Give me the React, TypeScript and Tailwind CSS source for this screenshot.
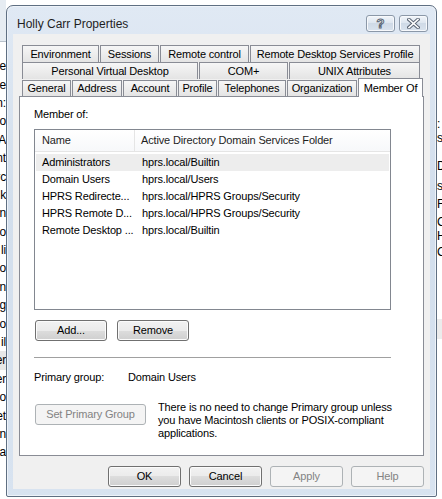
import React from 'react';

const TAB_ROW_1 = [
  { label: 'Environment', w: 'w-[77px]' },
  { label: 'Sessions', w: 'w-[59px]' },
  { label: 'Remote control', w: 'w-[89px]' },
  { label: 'Remote Desktop Services Profile', w: 'w-[170px]' },
];

const TAB_ROW_2 = [
  { label: 'Personal Virtual Desktop', w: 'w-[176px]' },
  { label: 'COM+', w: 'w-[89px]' },
  { label: 'UNIX Attributes', w: 'w-[131px]' },
];

const TAB_ROW_3 = [
  { label: 'General', w: 'w-[49px]' },
  { label: 'Address', w: 'w-[50px]' },
  { label: 'Account', w: 'w-[54px]' },
  { label: 'Profile', w: 'w-[39px]' },
  { label: 'Telephones', w: 'w-[68px]' },
  { label: 'Organization', w: 'w-[70px]' },
];

const GROUPS = [
  { name: 'Administrators', folder: 'hprs.local/Builtin' },
  { name: 'Domain Users', folder: 'hprs.local/Users' },
  { name: 'HPRS Redirecte...', folder: 'hprs.local/HPRS Groups/Security' },
  { name: 'HPRS Remote D...', folder: 'hprs.local/HPRS Groups/Security' },
  { name: 'Remote Desktop ...', folder: 'hprs.local/Builtin' },
];

// bits of the window behind, cut off at the edges
const LEFT_BITS = ['ne', 'e', 'n:', 'o', 'A', 'nt', 'rc', 'k', 'n', 'o', 'li', 'o', 'n', 'g', 'o', 'il', 'er', 'er', 'o', 'et', 'n', 'a'];

const btn =
  'h-[21px] flex items-center justify-center rounded-[3px] border border-[#707070] bg-[linear-gradient(#f2f2f2_0%,#ebebeb_50%,#dddddd_50%,#cfcfcf_100%)] shadow-[inset_0_0_0_1px_#fbfbfb] text-black';
const btnOff =
  'h-[21px] flex items-center justify-center rounded-[3px] border border-[#adb2b5] bg-[#f4f4f4] text-[#838383]';

const Tab = ({ label, w, h = 'h-[17px]' }: { label: string; w: string; h?: string }) => (
  <div
    className={`${w} ${h} shrink-0 flex items-center justify-center border-l border-t border-r border-[#898c95] bg-[linear-gradient(#f6f6f6,#e4e4e4)] whitespace-nowrap leading-none`}
  >
    {label}
  </div>
);

export default function App() {
  return (
    <div className="w-[442px] h-[499px] overflow-hidden flex bg-white text-[11px] tracking-[-0.15px] text-black font-['Liberation_Sans',Arial,sans-serif]">
      {/* left edge of background window */}
      <div className="w-[6px] shrink-0 flex flex-col overflow-hidden">
        <div className="h-[42px] shrink-0 bg-[#e6ecf2] border-b border-[#b9c2cc]" />
        <div className="flex flex-col pt-[15px] text-[12px]">
          {LEFT_BITS.map((t, i) => (
            <div key={i} className={`h-[18.4px] flex justify-end items-center whitespace-nowrap ${i === 16 ? 'bg-[#e8e8e8]' : ''}`}>
              {t}
            </div>
          ))}
        </div>
      </div>

      {/* dialog window */}
      <div className="w-[431px] h-[492px] mt-[5px] shrink-0 flex flex-col rounded-t-[7px] rounded-b-[2px] border border-[#5f6f82] bg-[linear-gradient(#e0e9f4,#d2deec_40%,#d8e3f0)] shadow-[inset_0_0_0_1px_#eef3f9]">
        {/* title bar */}
        <div className="h-[28px] shrink-0 flex items-start pt-[9px] pl-[10px] pr-[8px]">
          <span className="mt-[2px] text-[12px] leading-[14px] tracking-normal text-[#1e1e1e]">Holly Carr Properties</span>
          <div className="ml-auto flex gap-[4px]">
            <div className="w-[29px] h-[17px] flex items-center justify-center rounded-[3px] border border-[#8b98a8] bg-[linear-gradient(#f1f5fa,#dce5ef_50%,#cfdae7_50%,#d9e3ee)] shadow-[inset_0_0_0_1px_#f7f9fc]">
              <span className="text-[13px] font-bold leading-none text-white [-webkit-text-stroke:1px_#5b6675]">?</span>
            </div>
            <div className="w-[29px] h-[17px] flex items-center justify-center rounded-[3px] border border-[#8b98a8] bg-[linear-gradient(#f1f5fa,#dce5ef_50%,#cfdae7_50%,#d9e3ee)] shadow-[inset_0_0_0_1px_#f7f9fc]">
              <svg width="13" height="11" viewBox="0 0 13 11">
                <path d="M2 1.5 L11 9.5 M11 1.5 L2 9.5" stroke="#5b6675" strokeWidth="3.6" strokeLinecap="square" />
                <path d="M2 1.5 L11 9.5 M11 1.5 L2 9.5" stroke="#ffffff" strokeWidth="1.6" strokeLinecap="square" />
              </svg>
            </div>
          </div>
        </div>

        {/* client area */}
        <div className="mx-[6px] h-[455px] shrink-0 bg-[#f0f0f0] flex flex-col pt-[11px] pl-[6px]">
          {/* tabs */}
          <div className="flex flex-col pl-[3px]">
            <div className="flex gap-[1px]">
              {TAB_ROW_1.map((t) => (
                <Tab key={t.label} {...t} />
              ))}
            </div>
            <div className="flex gap-[1px]">
              {TAB_ROW_2.map((t) => (
                <Tab key={t.label} {...t} />
              ))}
            </div>
            <div className="h-[17px] flex items-end gap-[1px]">
              {TAB_ROW_3.map((t) => (
                <Tab key={t.label} {...t} h="h-[16px]" />
              ))}
              <div className="relative z-10 w-[65px] h-[19px] -mb-px shrink-0 flex items-start justify-center pt-[4px] border-l border-t border-r border-[#898c95] bg-white whitespace-nowrap leading-none">
                Member Of
              </div>
            </div>
          </div>

          {/* tab page */}
          <div className="w-[405px] h-[360px] border border-[#898c95] bg-white flex flex-col pl-[14px] pt-[11px]">
            <div className="leading-[13px]">Member of:</div>

            <div className="mt-[8px] w-[357px] h-[181px] border border-[#828790] bg-white flex flex-col">
              <div className="h-[22px] shrink-0 flex items-stretch border-b border-[#e5e5e5] bg-[linear-gradient(#ffffff,#f7f8fa)] text-[#1e1e1e]">
                <div className="w-[100px] flex items-center pl-[7px] border-r border-[#e5e5e5]">Name</div>
                <div className="flex items-center pl-[6px]">Active Directory Domain Services Folder</div>
              </div>
              <div className="flex flex-col pt-[2px]">
                {GROUPS.map((g, i) => (
                  <div
                    key={g.name}
                    className={`h-[17px] mx-[1px] flex items-center whitespace-nowrap ${i === 0 ? 'bg-[#ededed]' : ''}`}
                  >
                    <span className="w-[99px] pl-[6px]">{g.name}</span>
                    <span className="pl-[7px]">{g.folder}</span>
                  </div>
                ))}
              </div>
            </div>

            <div className="mt-[10px] ml-[1px] flex gap-[10px]">
              <div className={`${btn} w-[72px]`}>Add...</div>
              <div className={`${btn} w-[72px]`}>Remove</div>
            </div>

            <div className="mt-[16px] w-[357px] h-[2px] border-t border-[#a0a0a0] border-b border-b-white" />

            <div className="mt-[12px] flex leading-[13px]">
              <span className="w-[94px]">Primary group:</span>
              <span>Domain Users</span>
            </div>

            <div className="mt-[20px] ml-[1px] flex items-start gap-[12px]">
              <div className={`${btnOff} w-[111px]`}>Set Primary Group</div>
              <p className="-mt-[3px] leading-[13px] whitespace-nowrap">
                There is no need to change Primary group unless
                <br />
                you have Macintosh clients or POSIX-compliant
                <br />
                applications.
              </p>
            </div>
          </div>

          {/* dialog buttons */}
          <div className="mt-[10px] pr-[6px] flex justify-end gap-[8px]">
            <div className={`${btn} w-[73px]`}>OK</div>
            <div className={`${btn} w-[73px]`}>Cancel</div>
            <div className={`${btnOff} w-[73px]`}>Apply</div>
            <div className={`${btnOff} w-[73px]`}>Help</div>
          </div>
        </div>
      </div>

      {/* right edge of background window */}
      <div className="w-[5px] shrink-0 flex flex-col overflow-hidden text-[12px]">
        <div className="h-[115px] shrink-0" />
        <div className="h-[14px] whitespace-nowrap">:</div>
        <div className="h-[28px] whitespace-nowrap">s</div>
        <div className="h-[20px] whitespace-nowrap">D</div>
        <div className="h-[18px] whitespace-nowrap">s</div>
        <div className="h-[18px] whitespace-nowrap">F</div>
        <div className="h-[14px] whitespace-nowrap">C</div>
        <div className="h-[16px] whitespace-nowrap">H</div>
        <div className="h-[16px] whitespace-nowrap">C</div>
        <div className="h-[60px] shrink-0" />
        <div className="h-[20px] shrink-0 bg-[#ececec]" />
      </div>
    </div>
  );
}
